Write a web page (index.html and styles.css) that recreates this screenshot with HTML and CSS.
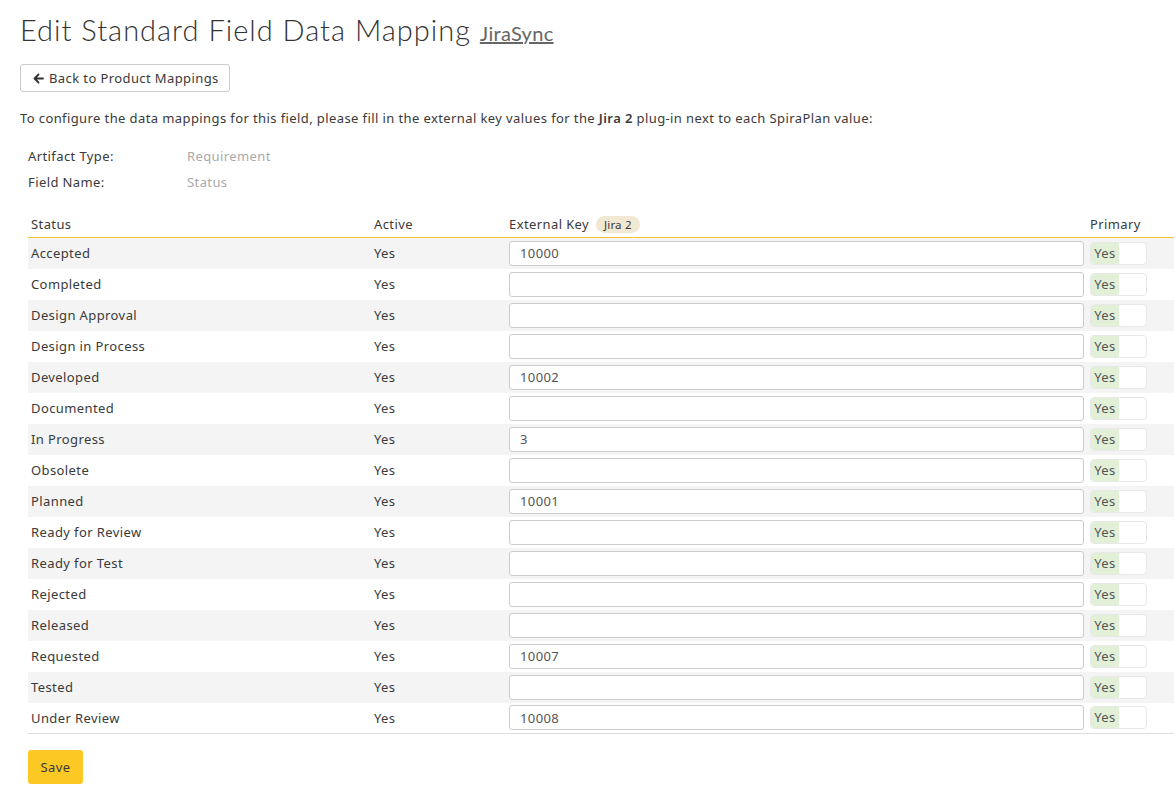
FILE: index.html
```html
<!DOCTYPE html>
<html>
<head>
<meta charset="utf-8">
<link rel="stylesheet" href="styles.css">
</head>
<body>
<div class="page">
  <h1 class="title">Edit Standard Field Data Mapping <a class="title-link" href="#">JiraSync</a></h1>
  <button class="back-btn"><svg class="arrow" width="11" height="11" viewBox="0 0 11 11"><path d="M10 5.5H2M5.5 1.5L1.5 5.5L5.5 9.5" fill="none" stroke="#333" stroke-width="1.8" stroke-linecap="round" stroke-linejoin="round"/></svg><span>Back to Product Mappings</span></button>
  <p class="intro">To configure the data mappings for this field, please fill in the external key values for the <b>Jira 2</b> plug-in next to each SpiraPlan value:</p>
  <div class="meta">
    <div class="meta-row"><span class="meta-label">Artifact Type:</span><span class="meta-value">Requirement</span></div>
    <div class="meta-row"><span class="meta-label">Field Name:</span><span class="meta-value">Status</span></div>
  </div>
  <table class="grid">
    <thead>
      <tr>
        <th class="c-status">Status</th>
        <th class="c-active">Active</th>
        <th class="c-key">External Key <span class="badge">Jira 2</span></th>
        <th class="c-primary">Primary</th>
      </tr>
    </thead>
    <tbody>
      <tr><td>Accepted</td><td>Yes</td><td><input class="key" value="10000"></td><td><span class="toggle"><span class="on">Yes</span></span></td></tr>
      <tr><td>Completed</td><td>Yes</td><td><input class="key" value=""></td><td><span class="toggle"><span class="on">Yes</span></span></td></tr>
      <tr><td>Design Approval</td><td>Yes</td><td><input class="key" value=""></td><td><span class="toggle"><span class="on">Yes</span></span></td></tr>
      <tr><td>Design in Process</td><td>Yes</td><td><input class="key" value=""></td><td><span class="toggle"><span class="on">Yes</span></span></td></tr>
      <tr><td>Developed</td><td>Yes</td><td><input class="key" value="10002"></td><td><span class="toggle"><span class="on">Yes</span></span></td></tr>
      <tr><td>Documented</td><td>Yes</td><td><input class="key" value=""></td><td><span class="toggle"><span class="on">Yes</span></span></td></tr>
      <tr><td>In Progress</td><td>Yes</td><td><input class="key" value="3"></td><td><span class="toggle"><span class="on">Yes</span></span></td></tr>
      <tr><td>Obsolete</td><td>Yes</td><td><input class="key" value=""></td><td><span class="toggle"><span class="on">Yes</span></span></td></tr>
      <tr><td>Planned</td><td>Yes</td><td><input class="key" value="10001"></td><td><span class="toggle"><span class="on">Yes</span></span></td></tr>
      <tr><td>Ready for Review</td><td>Yes</td><td><input class="key" value=""></td><td><span class="toggle"><span class="on">Yes</span></span></td></tr>
      <tr><td>Ready for Test</td><td>Yes</td><td><input class="key" value=""></td><td><span class="toggle"><span class="on">Yes</span></span></td></tr>
      <tr><td>Rejected</td><td>Yes</td><td><input class="key" value=""></td><td><span class="toggle"><span class="on">Yes</span></span></td></tr>
      <tr><td>Released</td><td>Yes</td><td><input class="key" value=""></td><td><span class="toggle"><span class="on">Yes</span></span></td></tr>
      <tr><td>Requested</td><td>Yes</td><td><input class="key" value="10007"></td><td><span class="toggle"><span class="on">Yes</span></span></td></tr>
      <tr><td>Tested</td><td>Yes</td><td><input class="key" value=""></td><td><span class="toggle"><span class="on">Yes</span></span></td></tr>
      <tr><td>Under Review</td><td>Yes</td><td><input class="key" value="10008"></td><td><span class="toggle"><span class="on">Yes</span></span></td></tr>
    </tbody>
  </table>
  <button class="save-btn">Save</button>
</div>
</body>
</html>
```
FILE: styles.css
```css
html, body {
  margin: 0;
  padding: 0;
  background: #fff;
}
body {
  font-family: "Noto Sans", "Open Sans", sans-serif;
  font-size: 13px;
  letter-spacing: 0.4px;
  color: #3a3a3a;
  overflow: hidden;
}
.page {
  padding: 12px 0 0 20px;
}
.title {
  font-family: "Lato", sans-serif;
  font-weight: 300;
  font-size: 29px;
  color: #333;
  margin: 0;
  letter-spacing: 1px;
  line-height: 36px;
}
.title-link {
  font-family: "Lato", sans-serif;
  font-weight: 400;
  font-size: 20px;
  color: #666;
  letter-spacing: 0.3px;
}
.back-btn {
  margin-top: 13px;
  height: 28px;
  width: 210px;
  background: #fff;
  border: 1px solid #ccc;
  border-radius: 3px;
  font-family: inherit;
  font-size: 13px;
  letter-spacing: 0.4px;
  color: #3a3a3a;
  padding: 0 12px;
  white-space: nowrap;
  display: flex;
  align-items: center;
  gap: 5px;
}
.arrow {
  display: block;
  flex: none;
}
.intro {
  margin: 18px 0 0 0;
  line-height: 17px;
}
.intro b {
  font-weight: 600;
}
.meta {
  margin: 21px 0 0 8px;
  display: flex;
  flex-direction: column;
  gap: 9px;
}
.meta-row {
  display: flex;
  line-height: 17px;
}
.meta-label {
  width: 159px;
}
.meta-value {
  color: #aaa;
}
.grid {
  margin: 22px 0 0 8px;
  border-collapse: collapse;
  width: 1146px;
}
.grid th {
  text-align: left;
  font-weight: 400;
  padding: 2px 3px 4px 3px;
  border-bottom: 1px solid #f0c53a;
  height: 17px;
}
.c-status { width: 337px; }
.c-active { width: 129px; }
.c-key { width: 575px; }
.c-primary { width: auto; }
.grid td {
  height: 31px;
  padding: 0 3px;
  box-sizing: border-box;
  vertical-align: middle;
}
.grid tbody tr:nth-child(odd) td {
  background: #f4f4f4;
}
.grid tbody tr:last-child td {
  border-bottom: 1px solid #ddd;
}
.badge {
  display: inline-block;
  background: #f0e8d2;
  border-radius: 9px;
  padding: 0 8px;
  font-size: 11.5px;
  line-height: 17px;
  margin-left: 3px;
  letter-spacing: 0.2px;
}
.key {
  box-sizing: border-box;
  width: 575px;
  height: 25px;
  border: 1px solid #ccc;
  border-radius: 3px;
  padding: 0 10px;
  font-family: inherit;
  font-size: 13px;
  letter-spacing: 0.4px;
  color: #555;
  background: #fff;
  display: block;
}
.toggle {
  display: flex;
  width: 57px;
  height: 23px;
  box-sizing: border-box;
  border: 1px solid #e8e8e8;
  border-radius: 4px;
  background: #fff;
  overflow: hidden;
}
.toggle .on {
  width: 28px;
  background: #e2f0d8;
  color: #555;
  line-height: 21px;
  text-align: center;
}
.save-btn {
  margin-top: 16px;
  margin-left: 8px;
  width: 55px;
  height: 34px;
  background: #fcc924;
  border: none;
  border-radius: 3px;
  font-family: inherit;
  font-size: 13px;
  letter-spacing: 0.4px;
  color: #3a3a3a;
}
```
